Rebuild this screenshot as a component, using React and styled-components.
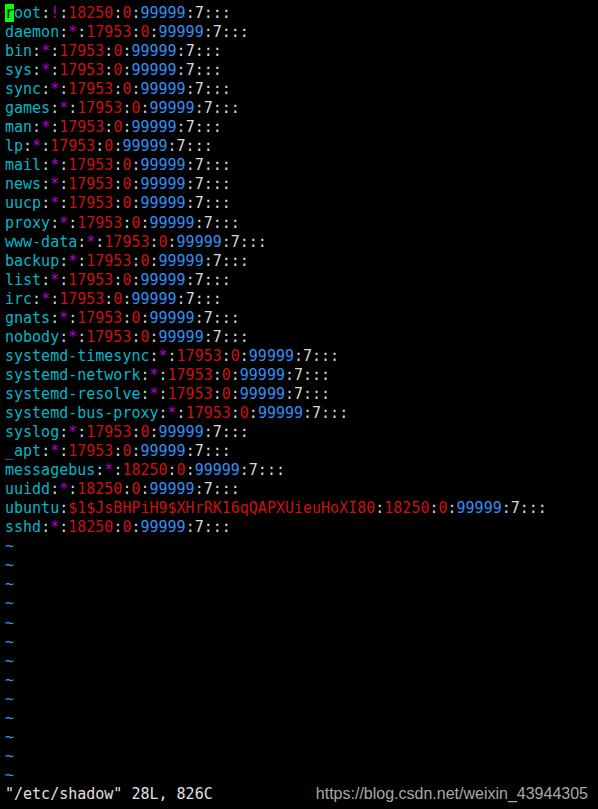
import styled, { createGlobalStyle } from 'styled-components'

const GlobalStyle = createGlobalStyle`
  html, body {
    margin: 0;
    padding: 0;
    background: #000;
  }
`

const Screen = styled.div`
  position: relative;
  width: 598px;
  height: 809px;
  box-sizing: border-box;
  padding: 4px 0 0 5px;
  background: #000;
  font-family: "DejaVu Sans Mono", "Liberation Mono", monospace;
  font-size: 15px;
  line-height: 19px;
  color: #d6d6d6;
  white-space: pre;
  overflow: hidden;
`

const Line = styled.div`
  height: 19.05px;
`

const User = styled.span`
  color: #00b8c8;
`

const Colon = styled.span`
  color: #c8d4dc;
`

const Pass = styled.span`
  color: ${p => (p.$hash ? '#cc1010' : '#b000c8')};
`

const Red = styled.span`
  color: #cc1010;
`

const Blue = styled.span`
  color: #2f8ef0;
`

const Plain = styled.span`
  color: #d8d8d8;
`

const Cursor = styled.span`
  background: #00ff00;
  color: #000;
`

const Tilde = styled.div`
  height: 19.05px;
  color: #2f9cf0;
`

const Status = styled.div`
  height: 19px;
  color: #e0e0e0;
`

const Watermark = styled.div`
  position: absolute;
  right: 10px;
  bottom: 5px;
  font-family: "Liberation Sans", Arial, sans-serif;
  font-size: 16px;
  line-height: 20px;
  color: #a8a8a8;
  white-space: nowrap;
`

const entries = [
  ['root', '!', '18250'],
  ['daemon', '*', '17953'],
  ['bin', '*', '17953'],
  ['sys', '*', '17953'],
  ['sync', '*', '17953'],
  ['games', '*', '17953'],
  ['man', '*', '17953'],
  ['lp', '*', '17953'],
  ['mail', '*', '17953'],
  ['news', '*', '17953'],
  ['uucp', '*', '17953'],
  ['proxy', '*', '17953'],
  ['www-data', '*', '17953'],
  ['backup', '*', '17953'],
  ['list', '*', '17953'],
  ['irc', '*', '17953'],
  ['gnats', '*', '17953'],
  ['nobody', '*', '17953'],
  ['systemd-timesync', '*', '17953'],
  ['systemd-network', '*', '17953'],
  ['systemd-resolve', '*', '17953'],
  ['systemd-bus-proxy', '*', '17953'],
  ['syslog', '*', '17953'],
  ['_apt', '*', '17953'],
  ['messagebus', '*', '18250'],
  ['uuidd', '*', '18250'],
  ['ubuntu', '$1$JsBHPiH9$XHrRK16qQAPXUieuHoXI80', '18250'],
  ['sshd', '*', '18250'],
]

export default function App() {
  const lines = entries.map(([user, pass, date], i) => (
    <Line key={user}>
      <User>
        {i === 0 ? <><Cursor>{user[0]}</Cursor>{user.slice(1)}</> : user}
      </User>
      <Colon>:</Colon>
      <Pass $hash={pass.length > 1}>{pass}</Pass>
      <Colon>:</Colon>
      <Red>{date}</Red>
      <Colon>:</Colon>
      <Red>0</Red>
      <Colon>:</Colon>
      <Blue>99999</Blue>
      <Colon>:</Colon>
      <Plain>7:::</Plain>
    </Line>
  ))

  const tildes = Array.from({ length: 13 }, (_, i) => <Tilde key={i}>~</Tilde>)

  return (
    <>
      <GlobalStyle />
      <Screen>
        {lines}
        {tildes}
        <Status>"/etc/shadow" 28L, 826C</Status>
        <Watermark>https://blog.csdn.net/weixin_43944305</Watermark>
      </Screen>
    </>
  )
}
